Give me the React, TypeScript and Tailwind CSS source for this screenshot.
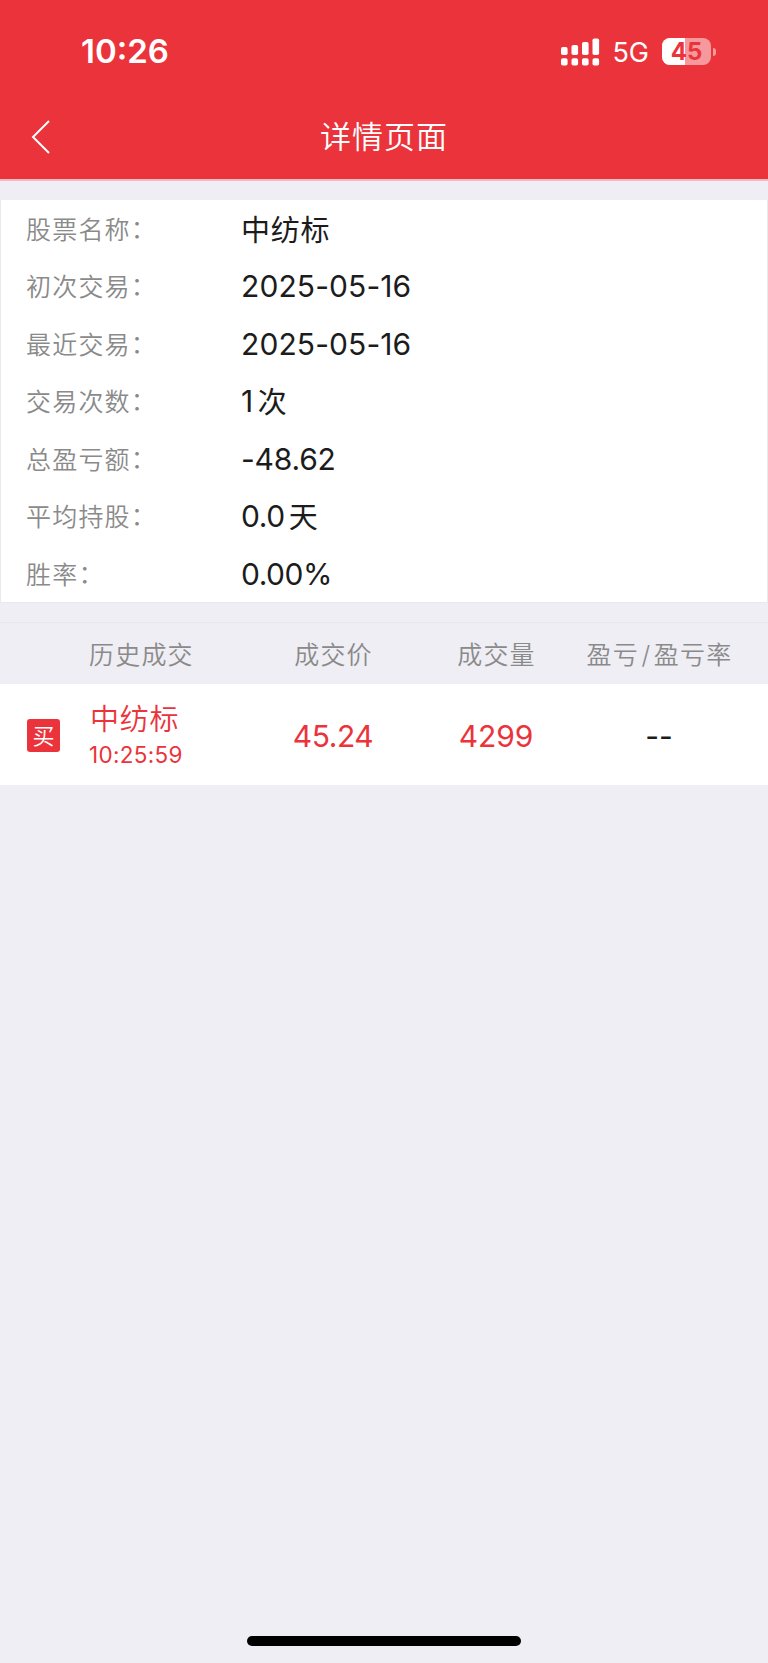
import React from 'react';

interface DetailField {
  label: string;
  value: string;
  valueClass?: string;
  unit?: string;
  unitClass?: string;
}

interface Trade {
  side: string;
  name: string;
  time: string;
  price: string;
  volume: string;
  profit: string;
}

const fields: DetailField[] = [
  { label: '股票名称', value: '', unit: '中纺标' },
  { label: '初次交易', value: '2025-05-16', valueClass: 'tracking-[0.1px]' },
  { label: '最近交易', value: '2025-05-16', valueClass: 'tracking-[0.1px]' },
  { label: '交易次数', value: '1', unit: '次', unitClass: 'ml-[5px]' },
  { label: '总盈亏额', value: '-48.62', valueClass: 'tracking-[-0.2px]' },
  { label: '平均持股', value: '0.0', unit: '天', unitClass: 'ml-[4px]' },
  { label: '胜率', value: '0.00%', valueClass: 'tracking-[-0.5px]' },
];

const trades: Trade[] = [
  { side: '买', name: '中纺标', time: '10:25:59', price: '45.24', volume: '4299', profit: '--' },
];

const SignalIcon = () => (
  <svg width="39" height="28" viewBox="0 0 39 28" fill="white">
    <rect x="0" y="9" width="6.6" height="8" rx="1.8" />
    <rect x="10.5" y="7" width="6.6" height="10" rx="1.8" />
    <rect x="21" y="4" width="6.6" height="13" rx="1.8" />
    <rect x="31.5" y="0.5" width="6.6" height="16.5" rx="1.8" />
    <rect x="0" y="20.3" width="6.6" height="7.2" rx="1.8" />
    <rect x="10.5" y="20.3" width="6.6" height="7.2" rx="1.8" />
    <rect x="21" y="20.3" width="6.6" height="7.2" rx="1.8" />
    <rect x="31.5" y="20.3" width="6.6" height="7.2" rx="1.8" />
  </svg>
);

const Battery = ({ level }: { level: number }) => (
  <div className="flex items-center">
    <div className="relative flex h-[27px] w-[49px] items-center justify-center overflow-hidden rounded-[8px] bg-white/50">
      <div className="absolute inset-y-0 left-0 bg-white" style={{ width: `${level + 1}%` }} />
      <span className="relative text-[24px] leading-none font-bold text-[#eb333b]">{level}</span>
    </div>
    <div className="ml-[2px] h-[8px] w-[3px] rounded-r-full bg-white/50" />
  </div>
);

const StatusBar = () => (
  <div className="flex h-[94px] items-center justify-between pt-[9px] pr-[52px] pl-[81px] text-white">
    <span className="text-[33px] leading-none font-semibold">10:26</span>
    <div className="flex items-center">
      <SignalIcon />
      <span className="mr-[13px] ml-[12px] pt-px text-[27px] leading-none">5G</span>
      <Battery level={45} />
    </div>
  </div>
);

const DetailRow = ({ label, value, valueClass, unit, unitClass }: DetailField) => (
  <div className="flex h-[57.5px] items-center">
    <div className="flex w-[240px] pt-[3px] pl-[25px] text-[25px] leading-none font-[350] tracking-[1.2px] text-[#8a8a8a]">
      {label}
      <span className="relative -top-px">：</span>
    </div>
    <div className="flex items-center text-[30px] leading-none text-[#1c1c1c]">
      {value && <span className={valueClass ?? 'tracking-[-0.4px]'}>{value}</span>}
      {unit && <span className={`pt-[3px] text-[29px] tracking-[0.8px] ${unitClass ?? ''}`}>{unit}</span>}
    </div>
  </div>
);

const TradeRow = ({ trade }: { trade: Trade }) => (
  <div className="flex h-[101px] items-center bg-white pt-[2px] text-[#eb333b]">
    <div className="w-[89px] pl-[27px]">
      <div className="flex h-[33px] w-[33px] items-center justify-center rounded-[3px] bg-[#eb333b] pt-px text-[22px] leading-none font-[350] text-white">
        {trade.side}
      </div>
    </div>
    <div className="w-[164px]">
      <p className="pl-px text-[29px] leading-[36px] font-[350] tracking-[0.8px]">{trade.name}</p>
      <p className="mt-[3px] mb-px text-[22.5px] leading-[28px] tracking-[0.3px]">{trade.time}</p>
    </div>
    <div className="w-[160px] text-center text-[30px] leading-none tracking-[-0.4px]">{trade.price}</div>
    <div className="w-[166px] text-center text-[30px] leading-none tracking-[-0.1px]">{trade.volume}</div>
    <div className="w-[160px] text-center text-[30px] leading-none text-[#1c1c1c]">{trade.profit}</div>
  </div>
);

export default function App() {
  return (
    <div className="flex h-[1663px] w-[768px] flex-col bg-[#efeef4] font-[Inter,'Noto_Sans_CJK_SC',sans-serif]">
      <header className="h-[181px] border-b-2 border-[#f0bcc0] bg-[#eb333b]">
        <StatusBar />
        <div className="grid h-[86px] grid-cols-[1fr_auto_1fr] items-center text-white">
          <button className="pl-[31px]">
            <svg width="20" height="34" viewBox="0 0 20 34" fill="none" stroke="white" strokeWidth="2">
              <path d="M18 1L2 17L18 33" />
            </svg>
          </button>
          <h1 className="pb-[2px] text-[31px] leading-none font-[350] tracking-[1px]">详情页面</h1>
        </div>
      </header>

      <section className="mt-[19px] h-[403px] border-x border-b border-[#e9e9ec] bg-white">
        {fields.map((field) => (
          <DetailRow key={field.label} {...field} />
        ))}
      </section>

      <section className="mt-[19px]">
        <div className="flex h-[62px] items-center border-t border-[#e8e8ea] pt-[3px] text-[25px] leading-none font-[350] tracking-[1.2px] text-[#8a8a8a]">
          <span className="w-[253px] pl-[89px]">历史成交</span>
          <span className="w-[161px] text-center">成交价</span>
          <span className="w-[165px] text-center">成交量</span>
          <span className="w-[161px] text-center">
            盈亏<span className="mx-[2.5px]">/</span>盈亏率
          </span>
        </div>
        {trades.map((trade) => (
          <TradeRow key={trade.time} trade={trade} />
        ))}
      </section>

      <div className="mx-auto mt-auto mb-[17px] h-[10px] w-[274px] rounded-full bg-black" />
    </div>
  );
}
